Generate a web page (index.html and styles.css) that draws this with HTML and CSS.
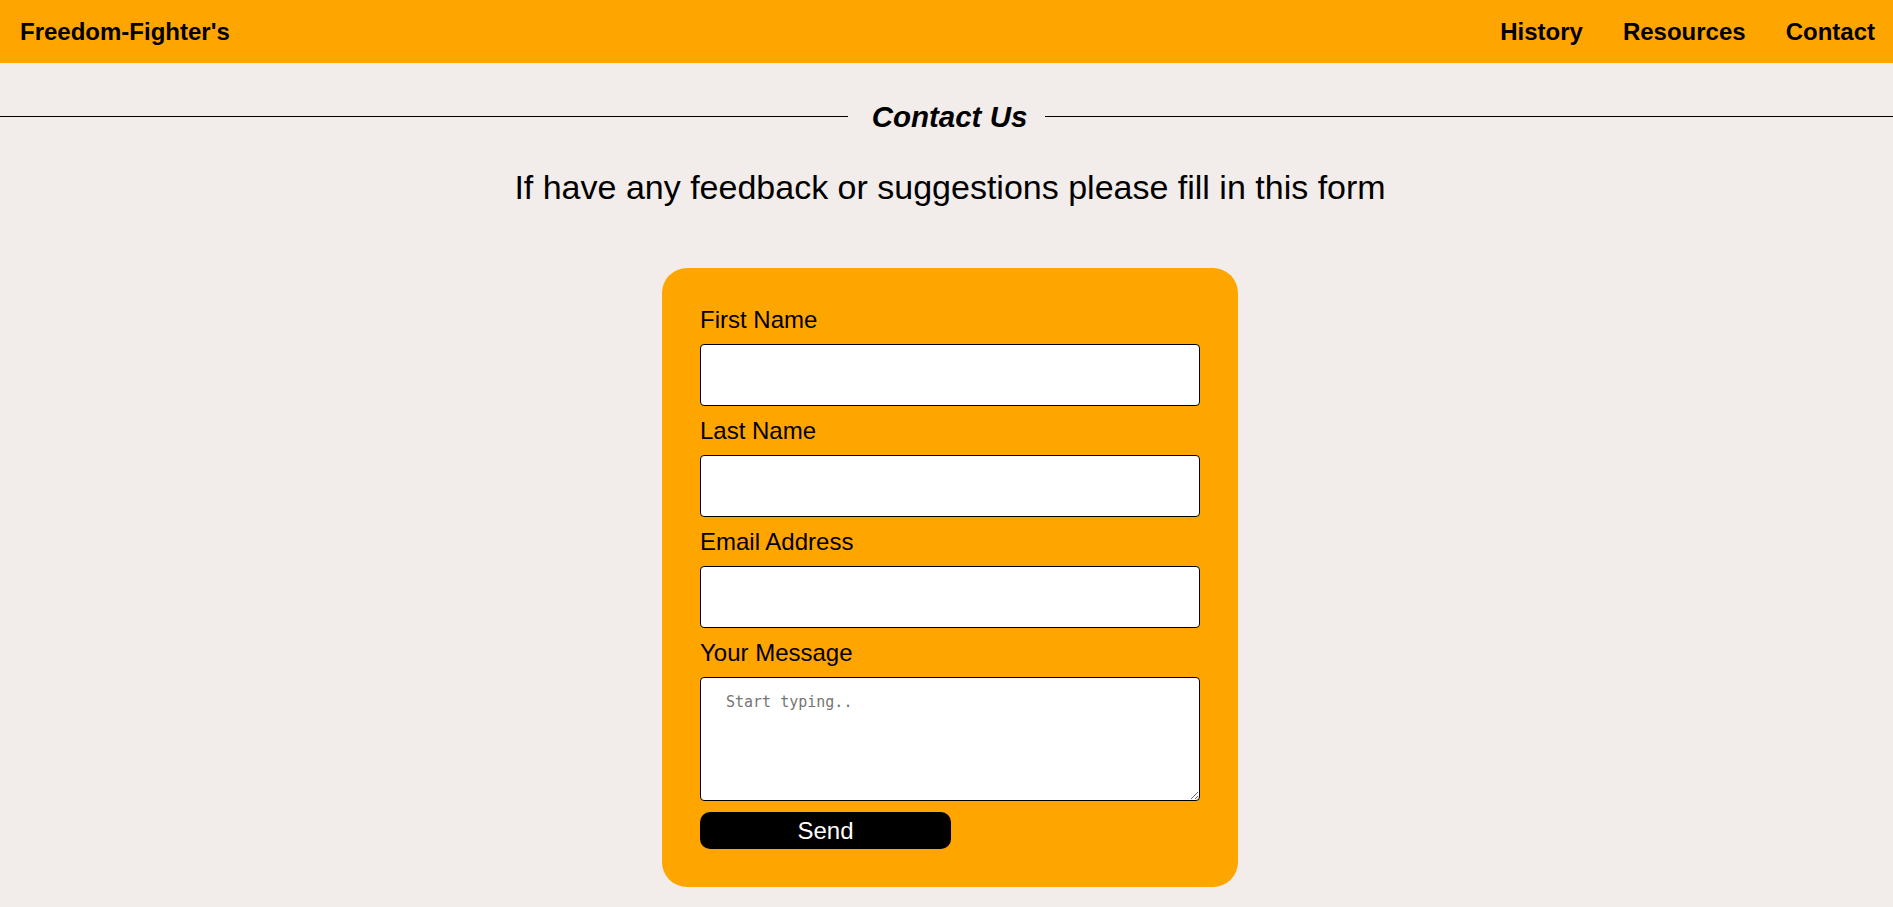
FILE: index.html
```html
<!DOCTYPE html>
<html lang="en">
<head>
<meta charset="utf-8">
<title>Contact Us - Freedom-Fighter's</title>
<link rel="stylesheet" href="styles.css">
</head>
<body>
<header class="nav">
  <a class="brand" href="#">Freedom-Fighter's</a>
  <nav class="links">
    <a href="#">History</a>
    <a href="#">Resources</a>
    <a href="#">Contact</a>
  </nav>
</header>
<h1 class="title"><span class="rule rule-left"></span><span class="title-text">Contact Us</span><span class="rule"></span></h1>
<main class="page">
  <p class="lead">If have any feedback or suggestions please fill in this form</p>
  <form class="card">
    <label class="label" for="fname">First Name</label>
    <input class="field" id="fname" type="text">
    <label class="label" for="lname">Last Name</label>
    <input class="field" id="lname" type="text">
    <label class="label" for="email">Email Address</label>
    <input class="field" id="email" type="email">
    <label class="label" for="msg">Your Message</label>
    <textarea class="message" id="msg" placeholder="Start typing.."></textarea>
    <button class="send" type="button">Send</button>
  </form>
</main>
</body>
</html>
```
FILE: styles.css
```css
html, body {
  margin: 0;
  padding: 0;
}
body {
  background: #f2edea;
  font-family: "Liberation Sans", Arial, sans-serif;
  color: #000;
}
.nav {
  height: 63px;
  background: #ffa500;
  display: flex;
  align-items: center;
  justify-content: space-between;
  padding: 0 18px 0 20px;
}
.brand, .links a {
  font-size: 24px;
  font-weight: bold;
  color: #000;
  text-decoration: none;
  line-height: 27px;
}
.links {
  display: flex;
  gap: 40px;
}
.title {
  margin: 37px 0 0;
  display: flex;
  align-items: center;
  height: 33px;
  font-size: 29.5px;
  font-style: italic;
  font-weight: bold;
  line-height: 33px;
}
.rule {
  flex: 1;
  height: 1px;
  background: #000;
}
.title-text {
  margin: 0 18px 0 24px;
}
.page {
  padding-left: 7px;
}
.lead {
  margin: 35px 0 0;
  text-align: center;
  font-size: 34px;
  line-height: 38px;
}
.card {
  width: 500px;
  margin: 62px auto 0;
  padding: 38px;
  background: #ffa500;
  border-radius: 25px;
  display: flex;
  flex-direction: column;
  gap: 11px;
}
.label {
  font-size: 24px;
  line-height: 27px;
}
.field {
  box-sizing: border-box;
  width: 500px;
  height: 62px;
  margin: 0;
  border: 1px solid #000;
  border-radius: 4px;
  background: #fff;
  padding: 0 12px;
  font-size: 20px;
  font-family: "Liberation Sans", Arial, sans-serif;
}
.message {
  box-sizing: border-box;
  width: 500px;
  height: 124px;
  margin: 0;
  border: 1px solid #000;
  border-radius: 4px;
  background: #fff;
  padding: 15px 25px;
  font-family: "DejaVu Sans Mono", "Liberation Mono", monospace;
  font-size: 15px;
}
.message::placeholder {
  color: #757575;
}
.send {
  width: 251px;
  height: 37px;
  margin: 0;
  padding: 0;
  border: none;
  border-radius: 10px;
  background: #000;
  color: #fff;
  font-family: "Liberation Sans", Arial, sans-serif;
  font-size: 24px;
  line-height: 37px;
}
```
